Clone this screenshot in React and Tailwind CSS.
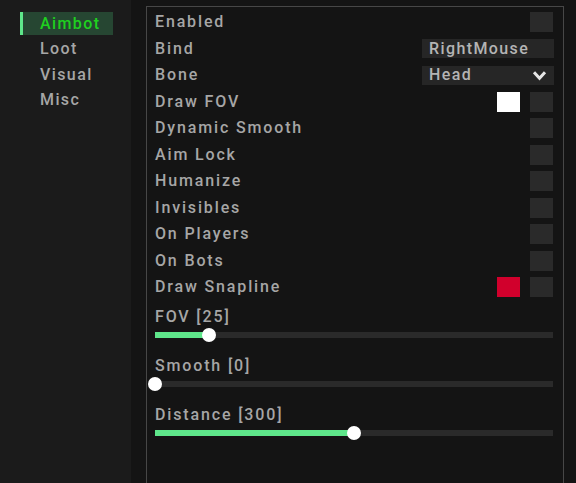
const tabs = ['Aimbot', 'Loot', 'Visual', 'Misc']

const rows = [
  { label: 'Enabled' },
  { label: 'Bind', input: 'RightMouse' },
  { label: 'Bone', select: 'Head' },
  { label: 'Draw FOV', color: 'bg-white' },
  { label: 'Dynamic Smooth' },
  { label: 'Aim Lock' },
  { label: 'Humanize' },
  { label: 'Invisibles' },
  { label: 'On Players' },
  { label: 'On Bots' },
  { label: 'Draw Snapline', color: 'bg-[#d1002c]' },
]

const sliders = [
  { label: 'FOV [25]', pct: 13.6 },
  { label: 'Smooth [0]', pct: 0 },
  { label: 'Distance [300]', pct: 50 },
]

function Checkbox() {
  return <div className="h-[20px] w-[23px] bg-[#2a2a2a]" />
}

function Slider({ label, pct }) {
  return (
    <div className="mb-[18px]">
      <div className="h-[20px] leading-[20px]">{label}</div>
      <div className="relative mt-[5px] h-[6px] bg-[#2a2a2a]">
        <div className="h-full bg-[#5ee68a]" style={{ width: `${pct}%` }} />
        <div
          className="absolute top-1/2 h-[14px] w-[14px] -translate-x-1/2 -translate-y-1/2 rounded-full bg-white"
          style={{ left: `${pct}%` }}
        />
      </div>
    </div>
  )
}

export default function App() {
  return (
    <div
      className="flex h-[483px] w-[576px] overflow-hidden bg-[#141414] text-[16px] font-medium tracking-[1.85px] text-[#a6a6a6]"
      style={{ fontFamily: 'Roboto, "Noto Sans", sans-serif' }}
    >
      <aside className="w-[131px] shrink-0 bg-[#1b1b1b] pl-[20px] pt-[12px] tracking-[1.4px]">
        {tabs.map((tab, i) =>
          i === 0 ? (
            <div key={tab} className="flex h-[23px] w-[93px] items-center border-l-[3px] border-[#5ee68a] bg-[#264632] pl-[17px] text-[#1fd01f]">
              {tab}
            </div>
          ) : (
            <div key={tab} className="flex h-[25.5px] items-center pl-[20px] pt-[3px]">
              {tab}
            </div>
          )
        )}
      </aside>

      <main className="flex-1 pl-[15px] pt-[6px]">
        <div className="h-full w-[418px] border border-b-0 border-[#474747] pl-[8px] pr-[10px] pt-[2px]">
          {rows.map((row) => (
            <div key={row.label} className="flex h-[26.5px] items-center justify-between">
              <span>{row.label}</span>
              {row.input && (
                <div className="mr-[-1px] flex h-[19px] w-[132px] items-center bg-[#262626] pl-[7px] tracking-[1.4px] text-[#b4b4b4]">
                  {row.input}
                </div>
              )}
              {row.select && (
                <div className="mr-[-1px] flex h-[19px] w-[132px] items-center justify-between bg-[#262626] pl-[7px] pr-[7px] tracking-[1.4px] text-[#b4b4b4]">
                  {row.select}
                  <svg width="15" height="11" viewBox="0 0 15 11" className="text-[#e6e6e6]">
                    <path d="M2 2.2 7.5 8.2 13 2.2" fill="none" stroke="currentColor" strokeWidth="3" strokeLinejoin="miter" />
                  </svg>
                </div>
              )}
              {!row.input && !row.select && (
                <div className="flex items-center gap-[10px]">
                  {row.color && <div className={`h-[20px] w-[23px] ${row.color}`} />}
                  <Checkbox />
                </div>
              )}
            </div>
          ))}

          <div className="mt-[6px]">
            {sliders.map((s) => (
              <Slider key={s.label} {...s} />
            ))}
          </div>
        </div>
      </main>
    </div>
  )
}
